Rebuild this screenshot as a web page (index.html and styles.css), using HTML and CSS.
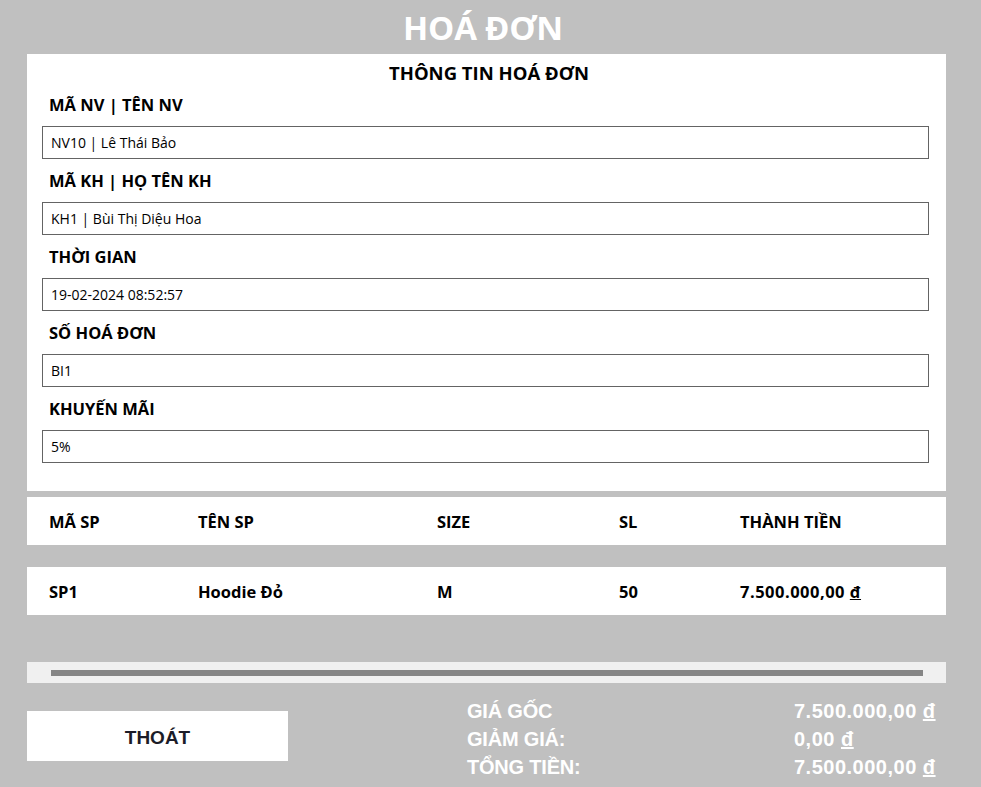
FILE: index.html
```html
<!DOCTYPE html>
<html lang="vi">
<head>
<meta charset="utf-8">
<title>Hoá đơn</title>
<link rel="stylesheet" href="styles.css">
</head>
<body>
<h1 class="title">HOÁ ĐƠN</h1>
<section class="panel">
  <h2 class="panel-title">THÔNG TIN HOÁ ĐƠN</h2>
  <div class="field">
    <label class="field-label">MÃ NV | TÊN NV</label>
    <div class="field-input">NV10 | Lê Thái Bảo</div>
  </div>
  <div class="field">
    <label class="field-label">MÃ KH | HỌ TÊN KH</label>
    <div class="field-input">KH1 | Bùi Thị Diệu Hoa</div>
  </div>
  <div class="field">
    <label class="field-label">THỜI GIAN</label>
    <div class="field-input">19-02-2024 08:52:57</div>
  </div>
  <div class="field">
    <label class="field-label">SỐ HOÁ ĐƠN</label>
    <div class="field-input">BI1</div>
  </div>
  <div class="field">
    <label class="field-label">KHUYẾN MÃI</label>
    <div class="field-input">5%</div>
  </div>
</section>
<div class="table">
  <div class="row head">
    <span>MÃ SP</span><span>TÊN SP</span><span>SIZE</span><span>SL</span><span>THÀNH TIỀN</span>
  </div>
  <div class="row data">
    <span>SP1</span><span>Hoodie Đỏ</span><span>M</span><span>50</span><span class="money">7.500.000,00 <u>đ</u></span>
  </div>
</div>
<div class="scrollbar"><div class="thumb"></div></div>
<footer class="footer">
  <button class="btn-exit">THOÁT</button>
  <div class="summary">
    <span class="sum-label">GIÁ GỐC</span><span class="sum-value">7.500.000,00 <u>đ</u></span>
    <span class="sum-label">GIẢM GIÁ:</span><span class="sum-value">0,00 <u>đ</u></span>
    <span class="sum-label">TỔNG TIỀN:</span><span class="sum-value">7.500.000,00 <u>đ</u></span>
  </div>
</footer>
</body>
</html>
```
FILE: styles.css
```css
* { box-sizing: border-box; }
html, body {
  margin: 0;
  padding: 0;
}
body {
  width: 981px;
  height: 787px;
  overflow: hidden;
  background: #c0c0c0;
  font-family: "Open Sans", "Noto Sans", sans-serif;
  color: #000;
}
.title {
  margin: 0;
  height: 54px;
  line-height: 56px;
  padding-right: 15px;
  text-align: center;
  color: #fff;
  font-size: 33px;
  font-weight: 700;
  letter-spacing: -0.2px;
}
.panel {
  margin: 0 35px 0 27px;
  background: #fff;
  padding: 7px 17px 28px 15px;
}
.panel-title {
  margin: 0;
  padding-left: 7px;
  text-align: center;
  font-size: 18.5px;
  line-height: 24px;
  font-weight: 700;
}
.field {
  padding-top: 9px;
}
.field + .field {
  padding-top: 11px;
}
.field-label {
  display: block;
  padding-left: 7px;
  font-size: 16.5px;
  line-height: 22px;
  font-weight: 700;
}
.field-input {
  margin-top: 10px;
  height: 33px;
  border: 1px solid #646464;
  padding-left: 8px;
  font-size: 14px;
  line-height: 32px;
}
.table {
  margin: 6px 35px 0 27px;
}
.row {
  display: grid;
  grid-template-columns: 149px 239px 182px 121px auto;
  height: 48px;
  align-items: center;
  padding-left: 22px;
  padding-top: 1px;
  background: #fff;
  font-size: 16.5px;
  font-weight: 700;
}
.row.data {
  margin-top: 22px;
}
.money {
  letter-spacing: 0.5px;
}
.scrollbar {
  margin: 47px 35px 0 27px;
  height: 21px;
  background: #f0f0f0;
  padding: 8px 23px 0 24px;
}
.thumb {
  height: 6px;
  background: #858585;
}
.footer {
  display: flex;
  margin: 14px 0 0 27px;
}
.btn-exit {
  margin-top: 14px;
  width: 261px;
  height: 50px;
  border: none;
  background: #fff;
  font-family: "Liberation Sans", Arial, sans-serif;
  font-weight: 700;
  font-size: 19px;
  line-height: 50px;
  padding: 2px 0 0;
  color: #1c1c28;
}
.summary {
  margin-left: 179px;
  display: grid;
  grid-template-columns: 327px auto;
  font-family: "Liberation Sans", Arial, sans-serif;
  font-weight: 700;
  font-size: 20px;
  line-height: 28px;
  color: #fff;
}
.sum-label {
  letter-spacing: -0.2px;
}
.sum-value {
  letter-spacing: 0.5px;
}
```
